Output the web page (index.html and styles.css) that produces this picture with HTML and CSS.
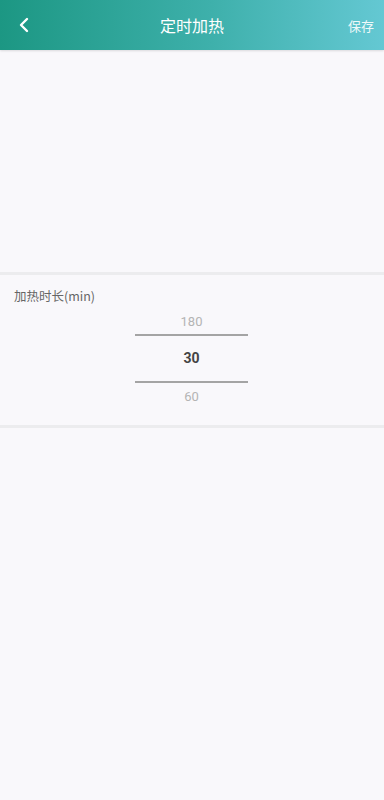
FILE: index.html
```html
<!DOCTYPE html>
<html lang="zh">
<head>
<meta charset="utf-8">
<link rel="stylesheet" href="styles.css">
</head>
<body>
<div class="page">
  <header class="topbar">
    <div class="back">
      <svg width="12" height="16" viewBox="0 0 12 16"><path d="M9 2 L3 8 L9 14" fill="none" stroke="#fff" stroke-width="2.4" stroke-linecap="round" stroke-linejoin="round"/></svg>
    </div>
    <div class="title">定时加热</div>
    <div class="save">保存</div>
  </header>
  <div class="blank"></div>
  <div class="divider"></div>
  <section class="setting">
    <div class="label">加热时长(min)</div>
    <div class="picker">
      <div class="item top">180</div>
      <div class="line"></div>
      <div class="item active">30</div>
      <div class="line"></div>
      <div class="item bottom">60</div>
    </div>
  </section>
  <div class="divider"></div>
  <div class="rest"></div>
</div>
</body>
</html>
```
FILE: styles.css
```css
* { box-sizing: border-box; }
html, body { margin: 0; padding: 0; }
body {
  background: #f9f8fb;
  font-family: "Noto Sans CJK SC", "Noto Sans", Roboto, sans-serif;
  width: 384px;
  height: 800px;
  overflow: hidden;
}
.page { display: flex; flex-direction: column; height: 800px; }
.topbar {
  height: 50px;
  flex: none;
  display: flex;
  align-items: center;
  background: linear-gradient(90deg, #1c9783 0%, #3eb0ab 55%, #64c8d3 100%);
  box-shadow: 0 1px 2px rgba(0,0,0,0.12);
  color: #fff;
}
.back { width: 48px; padding-left: 18px; display: flex; align-items: center; height: 100%; }
.title {
  flex: 1;
  text-align: center;
  font-size: 16px;
  line-height: 50px;
  color: #fff;
}
.save {
  width: 48px;
  text-align: right;
  padding-right: 10px;
  font-size: 13px;
  color: #eef9fa;
}
.blank { height: 222px; flex: none; }
.divider { height: 3px; background: #ececee; flex: none; }
.setting { height: 150px; flex: none; padding: 13px 0 0 14px; }
.label { font-size: 12.5px; color: #666; line-height: 16px; }
.picker {
  width: 113px;
  margin: 6px 0 0 121px;
  display: flex;
  flex-direction: column;
  align-items: center;
  font-family: Roboto, "Noto Sans", sans-serif;
}
.item { text-align: center; width: 100%; }
.item.top { font-size: 13px; color: #b4b4b4; height: 24px; line-height: 24px; }
.item.bottom { font-size: 13px; color: #b4b4b4; height: 28px; line-height: 28px; }
.item.active { font-size: 14px; font-weight: 700; color: #444; height: 45px; line-height: 45px; }
.line { height: 2px; width: 100%; background: #a4a4a4; }
.rest { flex: 1; }
```
